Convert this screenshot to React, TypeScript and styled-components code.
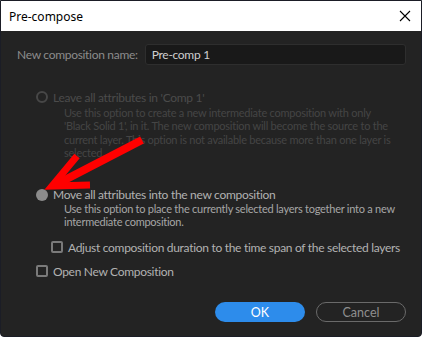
import React from "react";
import styled, { createGlobalStyle } from "styled-components";

const Global = createGlobalStyle`
  html, body {
    margin: 0;
    padding: 0;
    background: #ffffff;
  }
  body {
    font-family: "Lato", "Noto Sans", sans-serif;
  }
`;

const Window = styled.div`
  position: relative;
  width: 420px;
  height: 335px;
  border: 1px solid #1b1d26;
  border-radius: 0 0 4px 4px;
  background: #232323;
  display: flex;
  flex-direction: column;
  overflow: hidden;
`;

const TitleBar = styled.div`
  height: 30px;
  background: #ffffff;
  display: flex;
  align-items: center;
  justify-content: space-between;
  padding: 0 10px 0 8px;
  font-family: "Noto Sans", "Open Sans", sans-serif;
  font-size: 12px;
  color: #000;
`;

const CloseBtn = styled.div`
  width: 12px;
  height: 12px;
  display: flex;
`;

const Body = styled.div`
  flex: 1;
  display: flex;
  flex-direction: column;
  padding: 13px 15px 0 16px;
  font-size: 12px;
  letter-spacing: -0.3px;
`;

const NameRow = styled.div`
  display: flex;
  align-items: center;
  gap: 7px;
`;

const Label = styled.span`
  color: #8c8c8c;
  font-size: 12px;
`;

const NameInput = styled.div`
  flex: 1;
  height: 19px;
  border: 1px solid #2e2e2e;
  border-radius: 3px;
  background: #191919;
  color: #cfcfcf;
  display: flex;
  align-items: center;
  padding-left: 6px;
  font-size: 12px;
`;

const Options = styled.div`
  display: flex;
  flex-direction: column;
  padding-left: 19px;
  margin-top: 25px;
`;

const OptionRow = styled.div<{ $indent?: number; $top?: number; $dim?: boolean }>`
  display: flex;
  align-items: center;
  gap: 5px;
  height: 14px;
  margin-left: ${(p) => p.$indent ?? 0}px;
  margin-top: ${(p) => p.$top ?? 0}px;
  color: ${(p) => (p.$dim ? "#4b4b4b" : "#b2b2b2")};
  font-size: 12px;
  white-space: nowrap;
`;

const Radio = styled.span<{ $checked?: boolean }>`
  width: 12px;
  height: 12px;
  box-sizing: border-box;
  border-radius: 50%;
  flex: none;
  border: ${(p) => (p.$checked ? "none" : "2px solid #474747")};
  background: ${(p) => (p.$checked ? "#8b8b8b" : "transparent")};
`;

const Check = styled.span`
  width: 12px;
  height: 12px;
  box-sizing: border-box;
  border: 2px solid #7a7a7a;
  border-radius: 2px;
  flex: none;
`;

const Desc = styled.div<{ $dim?: boolean; $top?: number }>`
  margin-left: 28px;
  margin-top: ${(p) => p.$top ?? 2}px;
  line-height: 13.4px;
  font-size: 11px;
  letter-spacing: -0.25px;
  white-space: nowrap;
  color: ${(p) => (p.$dim ? "#454545" : "#a6a6a6")};
`;

const Buttons = styled.div`
  display: flex;
  justify-content: flex-end;
  gap: 11px;
  margin-top: auto;
  margin-bottom: 14px;
  letter-spacing: 0;
`;

const Button = styled.div<{ $primary?: boolean }>`
  width: 90px;
  height: 20px;
  box-sizing: border-box;
  border-radius: 10px;
  display: flex;
  align-items: center;
  justify-content: center;
  font-size: 12.5px;
  background: ${(p) => (p.$primary ? "#2d8ceb" : "transparent")};
  color: ${(p) => (p.$primary ? "#ffffff" : "#8f8f8f")};
  border: ${(p) => (p.$primary ? "none" : "1.5px solid #6a6a6a")};
`;

const Arrow = styled.svg`
  position: absolute;
  left: 0;
  top: 0;
  pointer-events: none;
`;

export default function App() {
  return (
    <>
      <Global />
      <Window>
        <TitleBar>
          <span>Pre-compose</span>
          <CloseBtn>
            <svg width="12" height="12" viewBox="0 0 12 12">
              <path d="M1 1 L11 11 M11 1 L1 11" stroke="#000" strokeWidth="1.1" />
            </svg>
          </CloseBtn>
        </TitleBar>
        <Body>
          <NameRow>
            <Label>New composition name:</Label>
            <NameInput>Pre-comp 1</NameInput>
          </NameRow>
          <Options>
            <OptionRow $dim>
              <Radio />
              Leave all attributes in 'Comp 1'
            </OptionRow>
            <Desc $dim>
              Use this option to create a new intermediate composition with only
              <br />
              'Black Solid 1', in it. The new composition will become the source to the
              <br />
              current layer. This option is not available because more than one layer is
              <br />
              selected.
            </Desc>
            <OptionRow $top={28}>
              <Radio $checked />
              Move all attributes into the new composition
            </OptionRow>
            <Desc $top={0}>
              Use this option to place the currently selected layers together into a new
              <br />
              intermediate composition.
            </Desc>
            <OptionRow $indent={15} $top={12}>
              <Check />
              Adjust composition duration to the time span of the selected layers
            </OptionRow>
            <OptionRow $top={10}>
              <Check />
              Open New Composition
            </OptionRow>
          </Options>
          <Buttons>
            <Button $primary>OK</Button>
            <Button>Cancel</Button>
          </Buttons>
        </Body>
        <Arrow width="420" height="335" viewBox="0 0 420 335">
          <path d="M141 139 L56 183" stroke="#ff0000" strokeWidth="8" fill="none" />
          <path d="M76 155 L51 185 L89 184" stroke="#ff0000" strokeWidth="7" fill="none" strokeLinejoin="miter" />
        </Arrow>
      </Window>
    </>
  );
}
